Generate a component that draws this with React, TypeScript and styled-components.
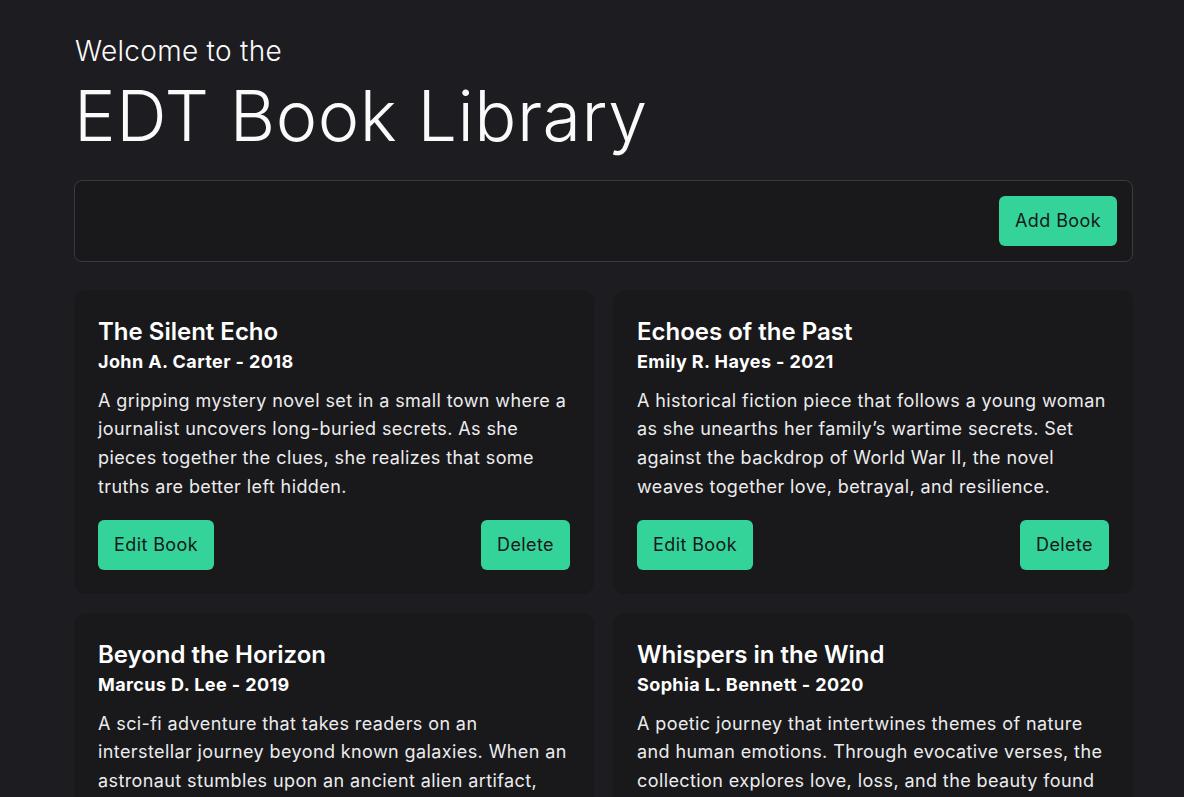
import React from "react";
import styled, { createGlobalStyle } from "styled-components";

const Global = createGlobalStyle`
  html, body { margin: 0; padding: 0; background: #1d1c21; }
  body { font-family: Inter, "Noto Sans", sans-serif; color: #f4f4f5; }
  * { box-sizing: border-box; }
`;

const Page = styled.main`
  padding: 35px 51px 40px 74px;
`;

const Header = styled.header`
  display: flex;
  flex-direction: column;
  margin-bottom: 26px;
`;

const Kicker = styled.p`
  margin: 0 0 8px 1px;
  font-size: 28px;
  font-weight: 300;
  line-height: 1.2;
  letter-spacing: 0.3px;
  color: #fafafa;
`;

const Title = styled.h1`
  margin: 0;
  font-size: 70px;
  font-weight: 300;
  line-height: 1.1;
  letter-spacing: 0.5px;
  color: #fafafa;
`;

const Toolbar = styled.div`
  display: flex;
  justify-content: flex-end;
  align-items: center;
  padding: 15px;
  border: 1px solid #3a3a3f;
  border-radius: 8px;
  background: #19191b;
  margin-bottom: 28px;
`;

const Button = styled.button`
  height: 50px;
  padding: 0 16px;
  border: none;
  border-radius: 6px;
  background: #34d399;
  color: #18181b;
  font-family: inherit;
  font-size: 18px;
  font-weight: 400;
  letter-spacing: 0.4px;
  cursor: pointer;
`;

const Grid = styled.section`
  display: grid;
  grid-template-columns: 1fr 1fr;
  gap: 19px;
`;

const Card = styled.article`
  background: #19191b;
  border-radius: 12px;
  padding: 24px 24px 24px;
  display: flex;
  flex-direction: column;
`;

const BookTitle = styled.h2`
  margin: 4px 0 4px;
  font-size: 24px;
  font-weight: 600;
  line-height: 1.2;
  color: #ffffff;
`;

const Author = styled.h3`
  margin: 0 0 13px;
  font-size: 18px;
  font-weight: 700;
  line-height: 1.3;
  letter-spacing: 0.4px;
  color: #ffffff;
`;

const Description = styled.p`
  margin: 0 0 18px;
  font-size: 18px;
  line-height: 28.7px;
  letter-spacing: 0.4px;
  color: #ececee;
`;

const Actions = styled.div`
  display: flex;
  justify-content: space-between;
  align-items: center;
`;

const books = [
  {
    title: "The Silent Echo",
    author: "John A. Carter",
    year: 2018,
    text:
      "A gripping mystery novel set in a small town where a journalist uncovers long-buried secrets. As she pieces together the clues, she realizes that some truths are better left hidden.",
  },
  {
    title: "Echoes of the Past",
    author: "Emily R. Hayes",
    year: 2021,
    text:
      "A historical fiction piece that follows a young woman as she unearths her family’s wartime secrets. Set against the backdrop of World War II, the novel weaves together love, betrayal, and resilience.",
  },
  {
    title: "Beyond the Horizon",
    author: "Marcus D. Lee",
    year: 2019,
    text:
      "A sci-fi adventure that takes readers on an interstellar journey beyond known galaxies. When an astronaut stumbles upon an ancient alien artifact, humanity’s future hangs in the balance.",
  },
  {
    title: "Whispers in the Wind",
    author: "Sophia L. Bennett",
    year: 2020,
    text:
      "A poetic journey that intertwines themes of nature and human emotions. Through evocative verses, the collection explores love, loss, and the beauty found in everyday moments.",
  },
];

export default function App() {
  return (
    <>
      <Global />
      <Page>
        <Header>
          <Kicker>Welcome to the</Kicker>
          <Title>EDT Book Library</Title>
        </Header>
        <Toolbar>
          <Button>Add Book</Button>
        </Toolbar>
        <Grid>
          {books.map((b) => (
            <Card key={b.title}>
              <BookTitle>{b.title}</BookTitle>
              <Author>
                {b.author} - {b.year}
              </Author>
              <Description>{b.text}</Description>
              <Actions>
                <Button>Edit Book</Button>
                <Button>Delete</Button>
              </Actions>
            </Card>
          ))}
        </Grid>
      </Page>
    </>
  );
}
